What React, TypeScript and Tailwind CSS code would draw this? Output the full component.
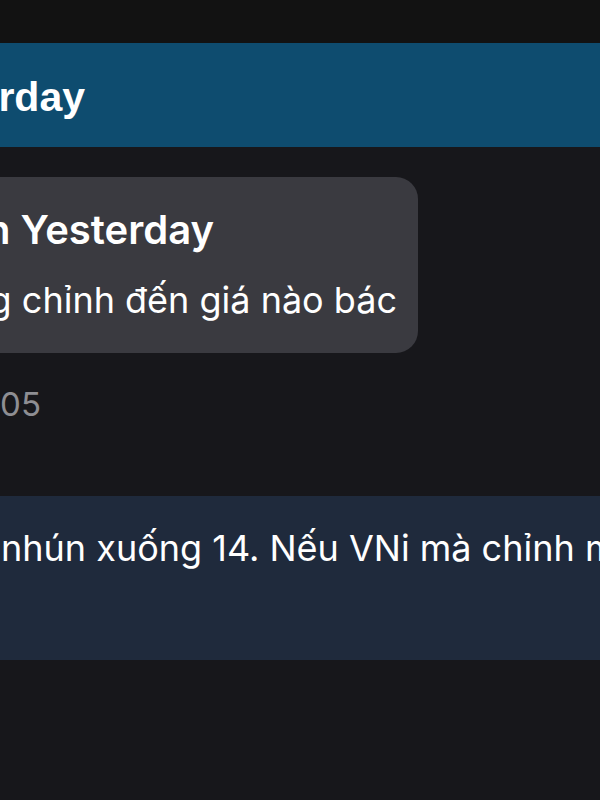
import React from 'react';

const App: React.FC = () => {
  return (
    <div className="w-[600px] h-[800px] overflow-hidden bg-[#17171b] flex flex-col font-['Inter','Noto_Sans',sans-serif] text-white">
      {/* top status strip */}
      <div className="h-[43px] shrink-0 bg-[#121212]" />

      {/* day header */}
      <div className="h-[104px] shrink-0 bg-[#0e4c6f] pt-[34px]">
        <div className="w-[85px] flex justify-end whitespace-nowrap">
          <span className="font-['Liberation_Sans',Arial,sans-serif] font-bold text-[41px] leading-[41px]">
            Yesterday
          </span>
        </div>
      </div>

      {/* quoted message bubble */}
      <div className="mt-[30px] w-[418px] shrink-0 rounded-r-[22px] bg-[#3a3a40] pt-[33px] pb-[35px]">
        <div className="w-[214px] flex justify-end whitespace-nowrap">
          <span className="font-semibold text-[40px] leading-[40px]">Trả lời Tuấn Yesterday</span>
        </div>
        <div className="mt-[32px] w-[397px] flex justify-end whitespace-nowrap">
          <span className="text-[36px] leading-[36px]">Anh nghĩ VNi không chỉnh đến giá nào bác</span>
        </div>
      </div>

      {/* time */}
      <div className="mt-[35px] w-[41px] flex justify-end whitespace-nowrap">
        <span className="text-[33px] leading-[33px] text-[#8e8e93]">10:05</span>
      </div>

      {/* reply message */}
      <div className="mt-[75px] h-[164px] shrink-0 bg-[#1f2a3c] pt-[34px]">
        <div className="flex whitespace-nowrap text-[36px] leading-[37px]">
          <div className="w-0 flex justify-end">
            <span className="pr-[10px]">Em nghĩ chắc chỉ</span>
          </div>
          <span className="pl-[1px]">nhún xuống 14. Nếu VNi mà chỉnh mạnh thì có thể về 13</span>
        </div>
      </div>
    </div>
  );
};

export default App;
